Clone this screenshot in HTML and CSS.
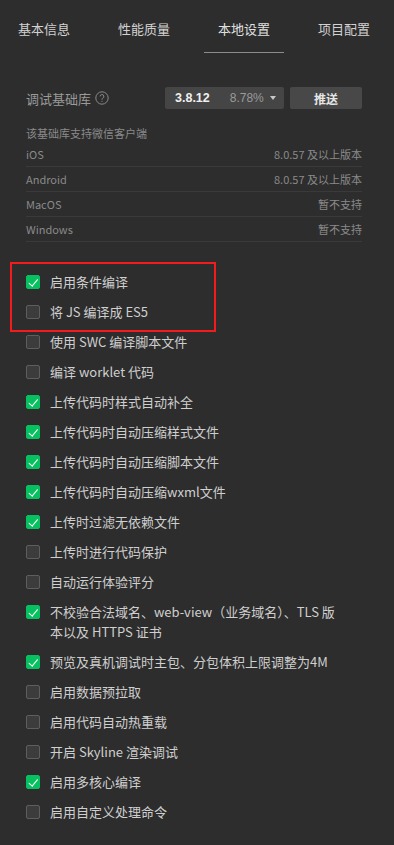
FILE: index.html
```html
<!DOCTYPE html>
<html lang="zh-CN">
<head>
<meta charset="utf-8">
<link rel="stylesheet" href="styles.css">
</head>
<body>
<div class="page">
  <nav class="tabs">
    <div class="tab">基本信息</div>
    <div class="tab">性能质量</div>
    <div class="tab active">本地设置</div>
    <div class="tab">项目配置</div>
  </nav>

  <div class="lib-row">
    <div class="lib-label">调试基础库
      <svg class="help" width="14" height="14" viewBox="0 0 14 14">
        <circle cx="7" cy="7" r="6.2" fill="none" stroke="#8a8a8a" stroke-width="1"/>
        <path d="M5.1 5.4a1.9 1.9 0 1 1 2.6 1.8c-.5.2-.7.6-.7 1.1v.5" fill="none" stroke="#8a8a8a" stroke-width="1"/>
        <circle cx="7" cy="10.3" r="0.6" fill="#8a8a8a"/>
      </svg>
    </div>
    <div class="lib-actions">
      <div class="select">
        <span class="ver">3.8.12</span>
        <span class="pct">8.78%</span>
        <span class="caret"></span>
      </div>
      <div class="push">推送</div>
    </div>
  </div>

  <div class="support">
    <div class="support-title">该基础库支持微信客户端</div>
    <div class="support-row"><span>iOS</span><span>8.0.57 及以上版本</span></div>
    <div class="support-row"><span>Android</span><span>8.0.57 及以上版本</span></div>
    <div class="support-row"><span>MacOS</span><span>暂不支持</span></div>
    <div class="support-row"><span>Windows</span><span>暂不支持</span></div>
  </div>

  <div class="options">
    <div class="highlight"></div>
    <label class="opt"><span class="cb on"></span><span class="txt">启用条件编译</span></label>
    <label class="opt"><span class="cb"></span><span class="txt">将 JS 编译成 ES5</span></label>
    <label class="opt"><span class="cb"></span><span class="txt">使用 SWC 编译脚本文件</span></label>
    <label class="opt"><span class="cb"></span><span class="txt">编译 worklet 代码</span></label>
    <label class="opt"><span class="cb on"></span><span class="txt">上传代码时样式自动补全</span></label>
    <label class="opt"><span class="cb on"></span><span class="txt">上传代码时自动压缩样式文件</span></label>
    <label class="opt"><span class="cb on"></span><span class="txt">上传代码时自动压缩脚本文件</span></label>
    <label class="opt"><span class="cb on"></span><span class="txt">上传代码时自动压缩wxml文件</span></label>
    <label class="opt"><span class="cb on"></span><span class="txt">上传时过滤无依赖文件</span></label>
    <label class="opt"><span class="cb"></span><span class="txt">上传时进行代码保护</span></label>
    <label class="opt"><span class="cb"></span><span class="txt">自动运行体验评分</span></label>
    <label class="opt"><span class="cb on"></span><span class="txt">不校验合法域名、web-view（业务域名）、TLS 版<br>本以及 HTTPS 证书</span></label>
    <label class="opt"><span class="cb on"></span><span class="txt">预览及真机调试时主包、分包体积上限调整为4M</span></label>
    <label class="opt"><span class="cb"></span><span class="txt">启用数据预拉取</span></label>
    <label class="opt"><span class="cb"></span><span class="txt">启用代码自动热重载</span></label>
    <label class="opt"><span class="cb"></span><span class="txt">开启 Skyline 渲染调试</span></label>
    <label class="opt"><span class="cb on"></span><span class="txt">启用多核心编译</span></label>
    <label class="opt"><span class="cb"></span><span class="txt">启用自定义处理命令</span></label>
  </div>
</div>
</body>
</html>
```

FILE: styles.css
```css
html, body {
  margin: 0;
  padding: 0;
  background: #2d2d2d;
}
body {
  font-family: "Noto Sans CJK SC", "Noto Sans", sans-serif;
  color: #cfcfcf;
  width: 394px;
  height: 845px;
  overflow: hidden;
}
.page {
  display: flex;
  flex-direction: column;
}
.tabs {
  display: flex;
  gap: 20px;
  padding-left: 4px;
}
.tab {
  width: 80px;
  text-align: center;
  font-size: 13px;
  line-height: 18px;
  padding: 20px 0 14px;
  border-bottom: 1px solid transparent;
  color: #d2d2d2;
}
.tab.active {
  border-bottom-color: #8c8c8c;
  color: #e0e0e0;
}
.lib-row {
  margin-top: 34px;
  padding: 0 32px 0 26px;
  display: flex;
  justify-content: space-between;
  align-items: center;
  height: 22px;
}
.lib-label {
  font-size: 13px;
  color: #9a9a9a;
  display: flex;
  align-items: center;
  gap: 4px;
}
.help { display: block; }
.lib-actions {
  display: flex;
  gap: 6px;
}
.select {
  width: 119px;
  height: 22px;
  box-sizing: border-box;
  background: #454545;
  border-radius: 2px;
  display: flex;
  align-items: center;
  padding-left: 10px;
  font-family: "Liberation Sans", Arial, sans-serif;
  font-size: 12px;
}
.ver {
  color: #f0f0f0;
  font-weight: bold;
  font-size: 12.5px;
}
.pct {
  color: #9a9a9a;
  margin-left: 20px;
}
.caret {
  width: 0;
  height: 0;
  border-left: 3px solid transparent;
  border-right: 3px solid transparent;
  border-top: 4px solid #c8c8c8;
  margin-left: 6px;
}
.push {
  width: 72px;
  height: 22px;
  background: #484848;
  border-radius: 2px;
  display: flex;
  align-items: center;
  justify-content: center;
  font-size: 12px;
  font-weight: bold;
  color: #e6e6e6;
}
.support {
  margin-top: 16px;
  padding: 0 32px 0 26px;
  font-size: 11px;
  color: #8a8a8a;
}
.support-title {
  line-height: 16px;
  margin-bottom: 1px;
}
.support-row {
  display: flex;
  justify-content: space-between;
  height: 24px;
  line-height: 24px;
  border-bottom: 1px solid #3a3a3a;
}
.options {
  position: relative;
  margin-top: 25px;
  padding: 0 26px;
  display: flex;
  flex-direction: column;
}
.highlight {
  position: absolute;
  left: 10px;
  top: -5px;
  width: 202px;
  height: 66px;
  border: 2px solid #f21c1c;
}
.opt {
  display: flex;
  align-items: flex-start;
  gap: 10px;
  padding: 5px 0;
  font-size: 13px;
  line-height: 20px;
  color: #cfcfcf;
}
.cb {
  flex: none;
  width: 14px;
  height: 14px;
  box-sizing: border-box;
  margin-top: 3px;
  border: 1px solid #5e5e5e;
  background: #3c3c3c;
  border-radius: 2px;
  position: relative;
}
.cb.on {
  background: #07c160;
  border-color: #07c160;
}
.cb.on::after {
  content: "";
  position: absolute;
  left: 3.5px;
  top: 0.5px;
  width: 3.5px;
  height: 7.5px;
  border-right: 1.8px solid #fff;
  border-bottom: 1.8px solid #fff;
  transform: rotate(40deg);
}
```
